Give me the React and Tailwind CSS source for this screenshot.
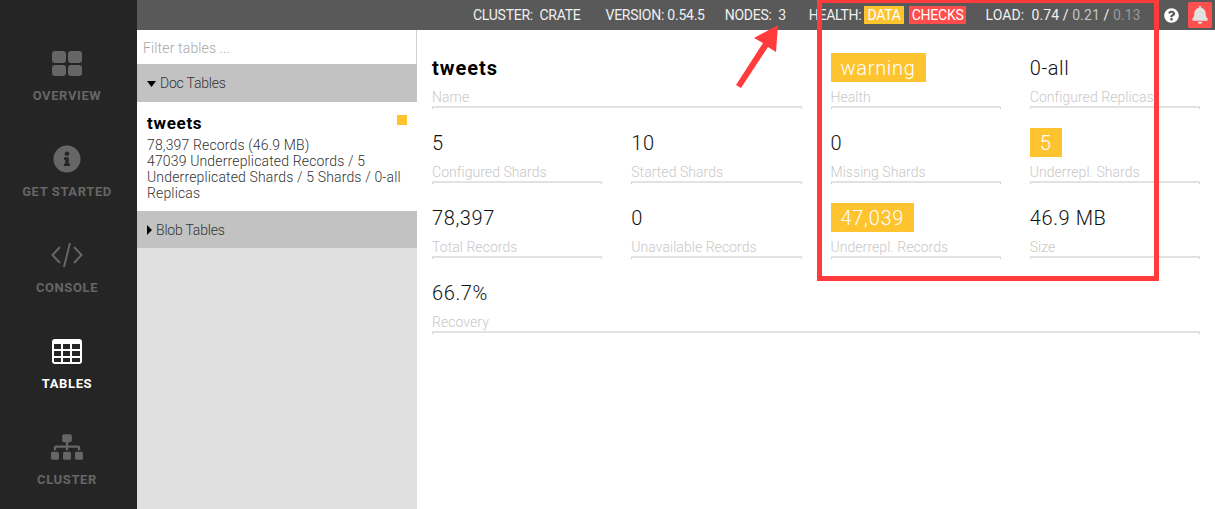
import { FaInfoCircle, FaSitemap, FaQuestionCircle, FaBell } from 'react-icons/fa';

const OverviewIcon = () => (
  <svg width="30" height="25" viewBox="0 0 30 25" fill="currentColor">
    <rect x="0" y="0" width="14" height="12" rx="3" />
    <rect x="16" y="0" width="14" height="12" rx="3" />
    <rect x="0" y="14" width="14" height="11" rx="3" />
    <rect x="16" y="14" width="14" height="11" rx="3" />
  </svg>
);

const CodeIcon = () => (
  <svg width="32" height="26" viewBox="0 0 32 26" fill="none" stroke="currentColor" strokeWidth="2">
    <path d="M9 5 L1.5 13 L9 21" />
    <path d="M23 5 L30.5 13 L23 21" />
    <path d="M19 1 L13 25" />
  </svg>
);

const TableIcon = () => (
  <svg width="30" height="25" viewBox="0 0 30 25" fill="currentColor">
    <path
      fillRule="evenodd"
      d="M3 0H27A3 3 0 0 1 30 3V22A3 3 0 0 1 27 25H3A3 3 0 0 1 0 22V3A3 3 0 0 1 3 0ZM2 5V10H9V5ZM11 5V10H18V5ZM20 5V10H28V5ZM2 12V17H9V12ZM11 12V17H18V12ZM20 12V17H28V12ZM2 19V23H9V19ZM11 19V23H18V19ZM20 19V23H28V19Z"
    />
  </svg>
);

const navItems = [
  { label: 'OVERVIEW', icon: <OverviewIcon /> },
  { label: 'GET STARTED', icon: <FaInfoCircle size={28} /> },
  { label: 'CONSOLE', icon: <CodeIcon /> },
  { label: 'TABLES', icon: <TableIcon />, active: true },
  { label: 'CLUSTER', icon: <FaSitemap size={32} /> },
];

const stats = [
  { value: 'tweets', label: 'Name', span: 'col-span-2', bold: true },
  { value: 'warning', label: 'Health', warn: true },
  { value: '0-all', label: 'Configured Replicas' },
  { value: '5', label: 'Configured Shards' },
  { value: '10', label: 'Started Shards' },
  { value: '0', label: 'Missing Shards' },
  { value: '5', label: 'Underrepl. Shards', warn: true },
  { value: '78,397', label: 'Total Records' },
  { value: '0', label: 'Unavailable Records' },
  { value: '47,039', label: 'Underrepl. Records', warn: true },
  { value: '46.9 MB', label: 'Size' },
  { value: '66.7%', label: 'Recovery', span: 'col-span-4' },
];

const Stat = ({ value, label, span = '', bold, warn }) => (
  <div className={`h-[75px] ${span}`}>
    <div className="h-[29px] flex items-center">
      {warn ? (
        <span className="h-[29px] px-[10px] bg-[#fec430] text-white text-[20px] tracking-[0.7px] leading-[30px]">{value}</span>
      ) : bold ? (
        <span className="text-[20px] font-bold text-black tracking-[1px]">{value}</span>
      ) : (
        <span className="text-[20px] text-[#111] tracking-[0.6px]">{value}</span>
      )}
    </div>
    <div className="relative mt-[7px] h-[19px] border-b-2 border-[#e2e2e2] text-[14px] leading-[16px] text-[#c8c8c8] tracking-[0.05px] whitespace-nowrap before:absolute before:left-0 before:bottom-[-3px] before:w-px before:h-px before:bg-[#c8c8c8] after:absolute after:right-0 after:bottom-[-3px] after:w-px after:h-px after:bg-[#c8c8c8]">
      {label}
    </div>
  </div>
);

const App = () => {
  return (
    <div className="relative w-[1215px] h-[509px] overflow-hidden flex bg-white font-['Roboto',sans-serif] font-light">
      <nav className="w-[137px] shrink-0 bg-[#252525] flex flex-col items-center pt-[47px] pr-[3px]">
        {navItems.map((item) => (
          <div
            key={item.label}
            className={`h-[96px] shrink-0 w-full flex flex-col items-center ${item.active ? 'text-white' : 'text-[#666666]'}`}
          >
            <div className="h-[32px] flex items-center justify-center">{item.icon}</div>
            <span className="mt-[9px] text-[13px] font-bold tracking-[0.6px] leading-[16px]">{item.label}</span>
          </div>
        ))}
      </nav>

      <div className="flex-1 flex flex-col">
        <header className="h-[30px] shrink-0 bg-[#595959] flex items-center text-[14px] font-normal tracking-[-0.25px] text-[#f0f0f0] whitespace-nowrap">
          <span className="ml-[336px]">CLUSTER:&nbsp; CRATE</span>
          <span className="ml-[25px]">VERSION: 0.54.5</span>
          <span className="ml-[20px]">NODES:&nbsp; 3</span>
          <span className="ml-[23px]">HEALTH:</span>
          <span className="ml-[3px] h-[18px] px-[3px] leading-[18px] bg-[#fec430] text-white">DATA</span>
          <span className="ml-[5px] h-[18px] px-[3px] leading-[18px] bg-[#ff4d4d] text-white">CHECKS</span>
          <span className="ml-[19px] tracking-[0.1px]">
            LOAD:&nbsp; 0.74 / <span className="text-[#c4c4c4]">0.21</span> / <span className="text-[#9a9a9a]">0.13</span>
          </span>
          <div className="ml-auto mr-[3px] flex items-center">
            <FaQuestionCircle size={15} className="text-white" />
            <div className="ml-[9px] w-[24px] h-[26px] bg-[#ff5050] rounded-[2px] flex items-center justify-center">
              <FaBell size={18} className="text-[#e2e2e2]" />
            </div>
          </div>
        </header>

        <div className="flex-1 flex">
          <aside className="w-[280px] shrink-0 bg-[#e0e0e0] flex flex-col">
            <div className="h-[34px] bg-white border-r border-[#d0d0d0] pl-[6px] pt-[2px] flex items-center text-[14px] text-[#a8a8a8] tracking-[0.15px]">
              Filter tables ...
            </div>
            <div className="h-[38px] bg-[#c2c2c2] pl-[10px] pt-[1px] flex items-center text-[14px] text-[#333] tracking-[-0.2px]">
              <svg width="9" height="6" viewBox="0 0 9 6" fill="#000" className="mr-[4px]">
                <path d="M0 0H9L4.5 6Z" />
              </svg>
              Doc Tables
            </div>
            <div className="relative h-[109px] bg-white px-[10px] pt-[10px]">
              <div className="text-[17px] leading-[22px] font-bold text-black tracking-[0.7px]">tweets</div>
              <span className="absolute right-[10px] top-[13px] w-[10px] h-[10px] bg-[#fec430]" />
              <p className="mt-[3px] text-[14px] leading-[16px] text-[#333] tracking-[0.15px]">
                78,397 Records (46.9 MB)
                <br />
                47039 Underreplicated Records / 5 Underreplicated Shards / 5 Shards / 0-all Replicas
              </p>
            </div>
            <div className="h-[37px] bg-[#c2c2c2] pl-[10px] pt-[1px] flex items-center text-[14px] text-[#333] tracking-[-0.2px]">
              <svg width="5" height="10" viewBox="0 0 5 10" fill="#000" className="mr-[4px]">
                <path d="M0 0L5 5L0 10Z" />
              </svg>
              Blob Tables
            </div>
          </aside>

          <main className="flex-1 pl-[15px] pr-[15px] pt-[23px]">
            <div className="grid grid-cols-4 gap-x-[29px]">
              {stats.map((stat) => (
                <Stat key={stat.label} {...stat} />
              ))}
            </div>
          </main>
        </div>
      </div>

      {/* annotation drawn over the screenshot */}
      <div className="absolute left-[817px] top-[-2px] w-[342px] h-[283px] border-[5px] border-[#ff3b3b]" />
      <svg className="absolute left-[730px] top-[20px]" width="60" height="75" viewBox="0 0 60 75" fill="#ff3b3b">
        <path d="M48 5 L24 18 L33 23 L6 65 L11 68 L38 27 L46 32 Z" />
      </svg>
    </div>
  );
};

export default App;
